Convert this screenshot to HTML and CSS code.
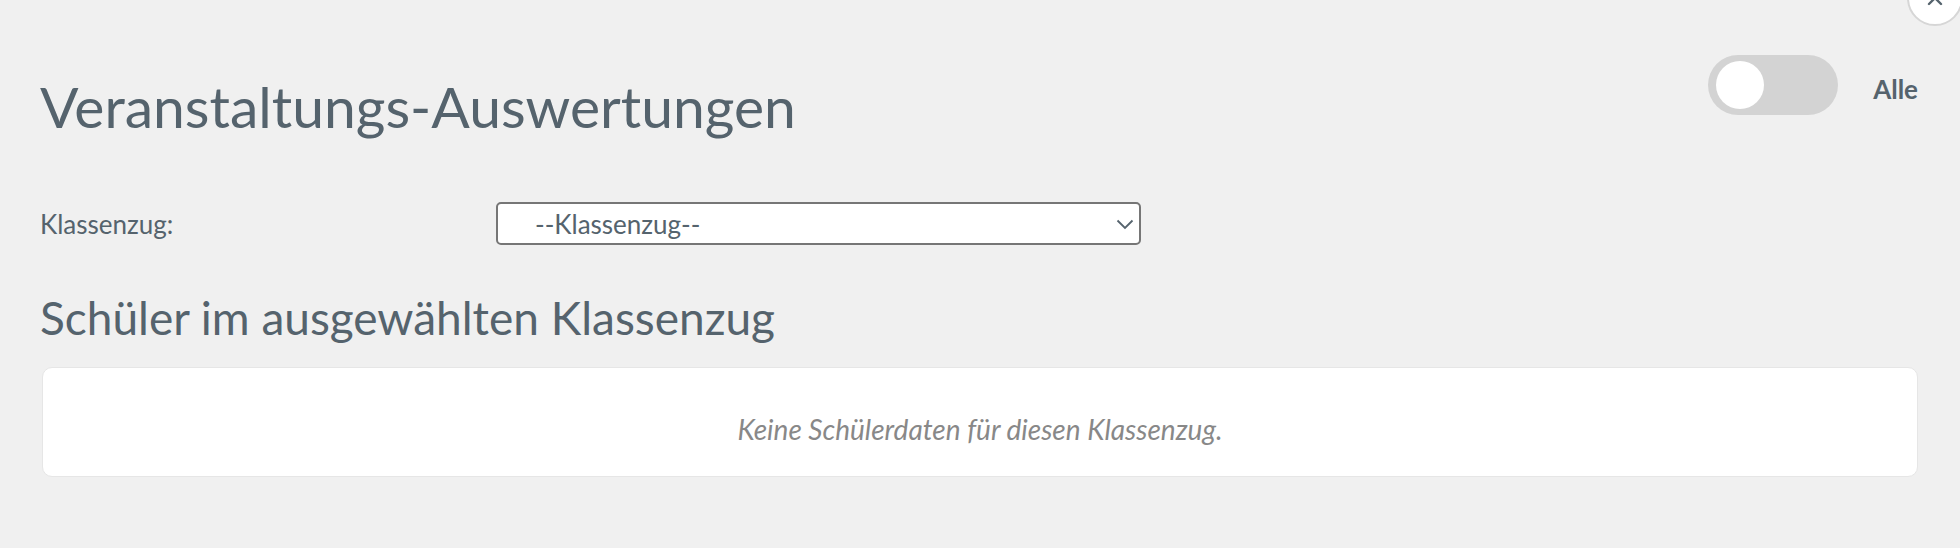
FILE: index.html
```html
<!DOCTYPE html>
<html lang="de">
<head>
<meta charset="utf-8">
<title>Veranstaltungs-Auswertungen</title>
<link rel="stylesheet" href="styles.css">
</head>
<body>
<div class="modal">
  <button class="close-btn" aria-label="Schließen">
    <svg width="18" height="18" viewBox="0 0 18 18"><path d="M3 3 L15 15 M15 3 L3 15" stroke="#55636d" stroke-width="2.4" stroke-linecap="round" fill="none"/></svg>
  </button>
  <header class="header">
    <h1 class="title">Veranstaltungs-Auswertungen</h1>
    <div class="toggle-group">
      <span class="toggle"><span class="knob"></span></span>
      <span class="toggle-label">Alle</span>
    </div>
  </header>
  <div class="form-row">
    <label class="form-label" for="zug">Klassenzug:</label>
    <div class="select-wrap">
      <select id="zug" class="select">
        <option>--Klassenzug--</option>
      </select>
      <svg class="chevron" width="18" height="11" viewBox="0 0 18 11"><path d="M1.5 1.5 L9 9 L16.5 1.5" stroke="#55636d" stroke-width="1.8" fill="none"/></svg>
    </div>
  </div>
  <h2 class="subtitle">Schüler im ausgewählten Klassenzug</h2>
  <div class="card">
    <p class="empty">Keine Schülerdaten für diesen Klassenzug.</p>
  </div>
</div>
</body>
</html>
```
FILE: styles.css
```css
* { box-sizing: border-box; }
html, body {
  margin: 0;
  background: #f0f0f0;
  font-family: Lato, "Open Sans", sans-serif;
  color: #55636d;
  overflow: hidden;
}
.modal {
  position: relative;
  padding: 0 42px 0 40px;
  height: 548px;
}
.close-btn {
  position: absolute;
  top: -30px;
  right: -3px;
  width: 56px;
  height: 56px;
  border-radius: 50%;
  border: 2px solid #d6d6d6;
  background: #ffffff;
  padding: 0;
  display: flex;
  align-items: center;
  justify-content: center;
}
.header {
  display: flex;
  justify-content: space-between;
  align-items: flex-start;
  padding-top: 55px;
}
.title {
  margin: 17px 0 0;
  font-size: 57px;
  line-height: 68px;
  font-weight: 400;
}
.toggle-group {
  display: flex;
  align-items: flex-start;
  gap: 35px;
}
.toggle {
  display: block;
  width: 130px;
  height: 60px;
  border-radius: 30px;
  background: #d3d3d3;
  padding: 6px 8px;
}
.knob {
  display: block;
  width: 48px;
  height: 48px;
  border-radius: 50%;
  background: #ffffff;
}
.toggle-label {
  margin-top: 19px;
  font-size: 26px;
  line-height: 30px;
  font-weight: 700;
}
.form-row {
  display: grid;
  grid-template-columns: 456px 645px;
  align-items: center;
  margin-top: 62px;
}
.form-label {
  font-size: 26px;
  line-height: 30px;
}
.select-wrap {
  position: relative;
}
.select {
  appearance: none;
  -webkit-appearance: none;
  display: block;
  width: 645px;
  height: 43px;
  border: 2px solid #767676;
  border-radius: 5px;
  background: #ffffff;
  padding: 0 0 0 37px;
  font-family: Lato, "Open Sans", sans-serif;
  font-size: 26px;
  color: #55636d;
}
.chevron {
  position: absolute;
  right: 7px;
  top: 17px;
  pointer-events: none;
}
.subtitle {
  margin: 46px 0 0;
  font-size: 46px;
  line-height: 54px;
  font-weight: 400;
}
.card {
  margin-top: 22px;
  margin-left: 2px;
  height: 110px;
  background: #ffffff;
  border: 1px solid #e6e6e6;
  border-radius: 10px;
  padding: 45px 0 0;
}
.empty {
  margin: 0;
  text-align: center;
  font-style: italic;
  font-size: 28px;
  line-height: 32px;
  color: #888888;
}
```
